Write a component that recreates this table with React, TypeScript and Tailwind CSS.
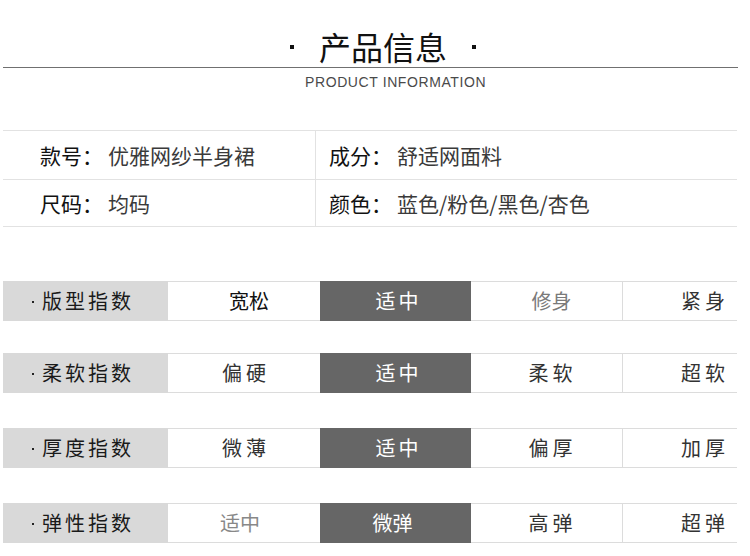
import React from "react";

type Cell = { t: string; cls: string };
type Row = { label: string; mt: string; cells: [Cell, Cell, Cell, Cell] };

const rows: Row[] = [
  {
    label: "版型指数",
    mt: "mt-[54px]",
    cells: [
      { t: "宽松", cls: "text-[#111] pl-[10px]" },
      { t: "适中", cls: "tracking-[3px] pl-[6px]" },
      { t: "修身", cls: "text-[#7a7a7a] pl-[2px]" },
      { t: "紧身", cls: "text-[#333] tracking-[4px]" },
    ],
  },
  {
    label: "柔软指数",
    mt: "mt-[32px]",
    cells: [
      { t: "偏硬", cls: "text-[#333] tracking-[4px] pl-[4px]" },
      { t: "适中", cls: "tracking-[3px] pl-[6px]" },
      { t: "柔软", cls: "text-[#333] tracking-[4px] pl-[4px]" },
      { t: "超软", cls: "text-[#333] tracking-[4px]" },
    ],
  },
  {
    label: "厚度指数",
    mt: "mt-[35px]",
    cells: [
      { t: "微薄", cls: "text-[#333] tracking-[4px] pl-[4px]" },
      { t: "适中", cls: "tracking-[3px] pl-[6px]" },
      { t: "偏厚", cls: "text-[#333] tracking-[4px] pl-[4px]" },
      { t: "加厚", cls: "text-[#333] tracking-[4px]" },
    ],
  },
  {
    label: "弹性指数",
    mt: "mt-[35px]",
    cells: [
      { t: "适中", cls: "text-[#888] pr-[8px]" },
      { t: "微弹", cls: "pr-[6px]" },
      { t: "高弹", cls: "text-[#333] tracking-[4px] pl-[4px]" },
      { t: "超弹", cls: "text-[#333] tracking-[4px]" },
    ],
  },
];

export default function App() {
  return (
    <div
      className="w-[750px] h-[556px] bg-white overflow-hidden"
      style={{ fontFamily: '"Noto Sans CJK SC", "Noto Sans", sans-serif' }}
    >
      {/* Header */}
      <div className="pt-[30px] flex items-center justify-center pl-[16px]">
        <span className="w-[4px] h-[4px] bg-[#111] mt-[2px]" />
        <span className="mx-[25px] text-[32px] leading-[32px] text-[#111]">产品信息</span>
        <span className="w-[4px] h-[4px] bg-[#111] mt-[2px]" />
      </div>
      <div className="mt-[5px] mx-[3px] w-[735px] h-[1px] bg-[#707070]" />
      <div
        className="mt-[6px] pl-[305px] text-[14px] leading-[16px] tracking-[0.6px] text-[#4a4a4a]"
        style={{ fontFamily: '"Liberation Sans", Arial, sans-serif' }}
      >
        PRODUCT INFORMATION
      </div>

      {/* Info table */}
      <div className="mt-[40px] mx-[3px] w-[734px] border-t border-[#e2e2e2] text-[21px] leading-[28px]">
        <div className="flex h-[49px] border-b border-[#e2e2e2]">
          <div className="w-[313px] border-r border-[#e2e2e2] flex items-center pl-[37px]">
            <span className="text-[#111]">款号：</span>
            <span className="ml-[5px] text-[#3a3a3a]">优雅网纱半身裙</span>
          </div>
          <div className="flex-1 flex items-center pl-[13px]">
            <span className="text-[#111]">成分：</span>
            <span className="ml-[5px] text-[#3a3a3a]">舒适网面料</span>
          </div>
        </div>
        <div className="flex h-[47px] border-b border-[#e2e2e2]">
          <div className="w-[313px] border-r border-[#e2e2e2] flex items-center pl-[37px]">
            <span className="text-[#111]">尺码：</span>
            <span className="ml-[5px] text-[#3a3a3a]">均码</span>
          </div>
          <div className="flex-1 flex items-center pl-[13px]">
            <span className="text-[#111]">颜色：</span>
            <span className="ml-[5px] text-[#3a3a3a]">蓝色/粉色/黑色/杏色</span>
          </div>
        </div>
      </div>

      {/* Index rows */}
      {rows.map((r) => (
        <div key={r.label} className={`${r.mt} mx-[3px] w-[734px] h-[40px] flex text-[20px] leading-[24px]`}>
          <div className="w-[165px] bg-[#d9d9d9] flex items-center pl-[29px] text-[#1a1a1a]">
            <span className="w-[2px] h-[2px] bg-[#222] mr-[8px] mt-[1px]" />
            <span className="tracking-[3px]">{r.label}</span>
          </div>
          <div className="w-[152px] border-y border-[#dcdcdc] flex items-center justify-center">
            <span className={r.cells[0].cls}>{r.cells[0].t}</span>
          </div>
          <div className="w-[151px] bg-[#666666] flex items-center justify-center text-white">
            <span className={r.cells[1].cls}>{r.cells[1].t}</span>
          </div>
          <div className="w-[152px] border-y border-r border-[#dcdcdc] flex items-center justify-center pl-[8px]">
            <span className={r.cells[2].cls}>{r.cells[2].t}</span>
          </div>
          <div className="w-[114px] border-y border-[#dcdcdc] flex items-center justify-end pr-[8px]">
            <span className={r.cells[3].cls}>{r.cells[3].t}</span>
          </div>
        </div>
      ))}
    </div>
  );
}
